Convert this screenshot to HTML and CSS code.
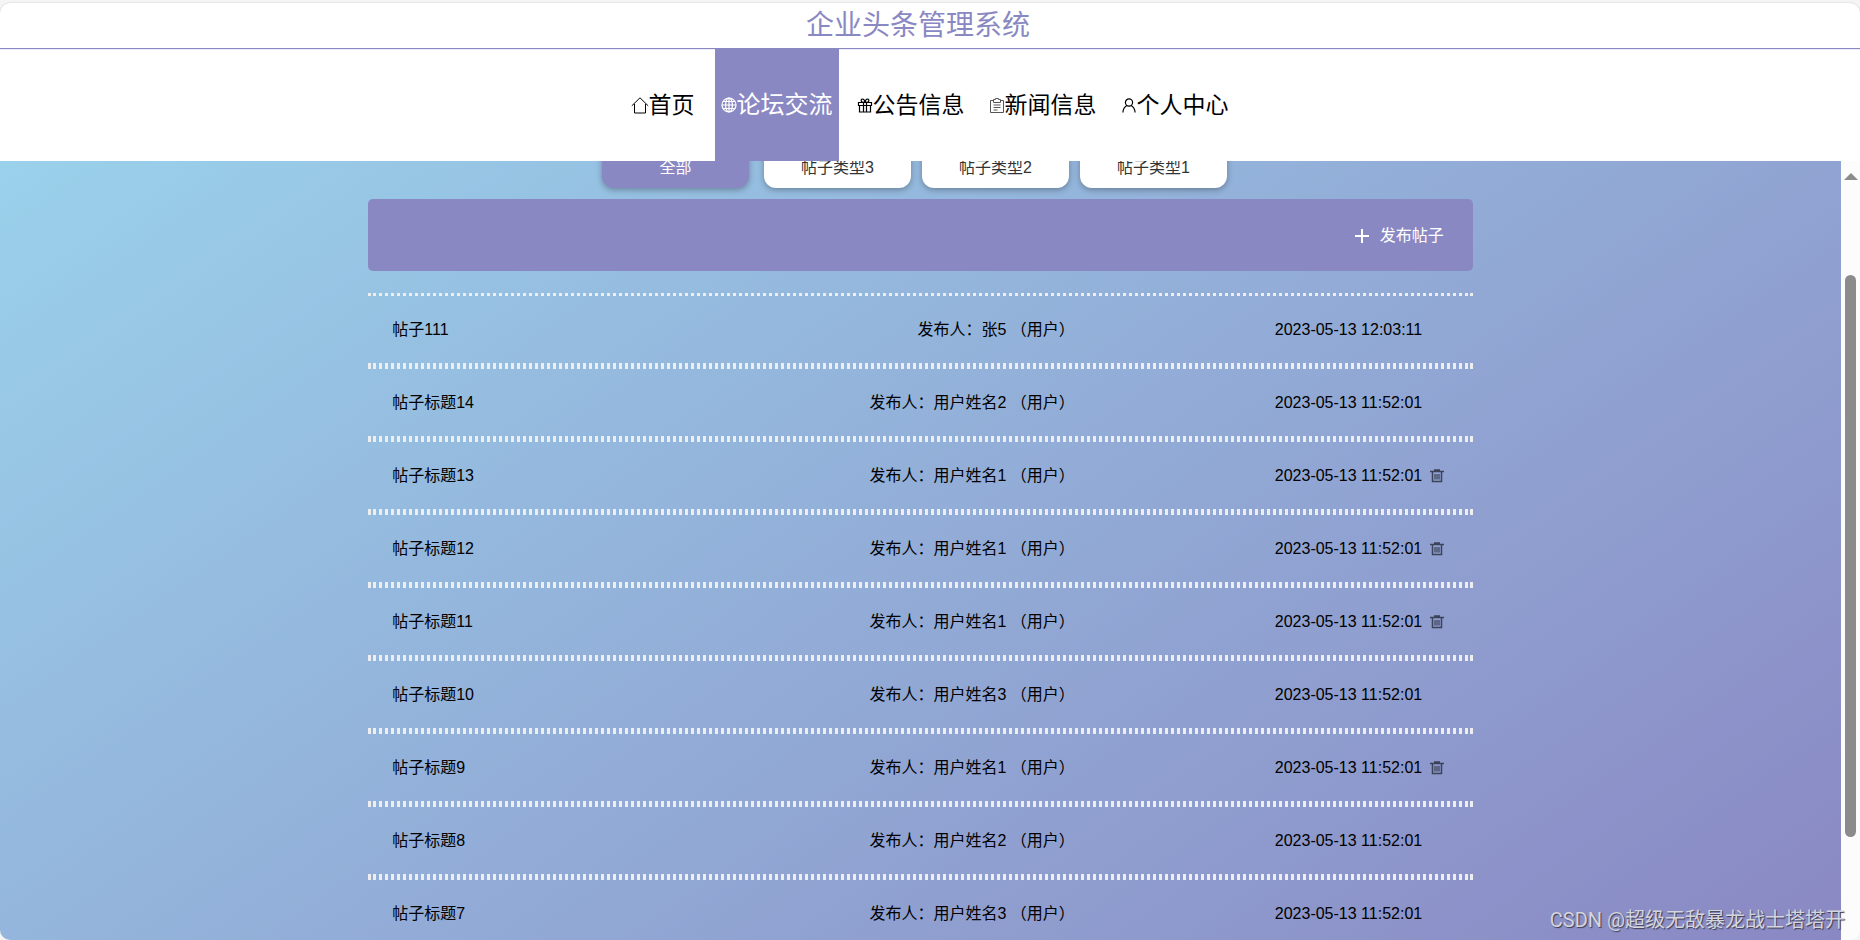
FILE: index.html
```html
<!DOCTYPE html>
<html lang="zh-CN">
<head>
<meta charset="utf-8">
<title>企业头条管理系统</title>
<link rel="stylesheet" href="styles.css">
</head>
<body>
<svg class="sprite" aria-hidden="true">
  <symbol id="trash" viewBox="0 0 14 14">
    <path d="M0 2.500h14M4 1h6M2.500 3v9.500h9V3" fill="none" stroke="currentColor" stroke-width="1.500"/>
    <path d="M5 5v5.500M7 5v5.500M9 5v5.500" fill="none" stroke="currentColor" stroke-width="1.200"/>
  </symbol>
</svg>
<div class="shell">
  <header class="header">
    <h1 class="brand">企业头条管理系统</h1>
    <nav class="nav">
      <a class="nav-item nav-home" href="#"><svg class="nav-icon" viewBox="0 0 18 18"><path d="M.8 9.800 9 1.800l8.200 8M3.500 8v9h11V8"/></svg>首页</a>
      <a class="nav-item active" href="#" aria-current="page"><svg class="nav-icon" viewBox="0 0 16 16"><circle cx="8" cy="8" r="7"/><ellipse cx="8" cy="8" rx="3.400" ry="7"/><path d="M8 1v14M1 8h14M2.200 4.500h11.600M2.200 11.500h11.600"/></svg>论坛交流</a>
      <a class="nav-item" href="#"><svg class="nav-icon" viewBox="0 0 16 16"><path d="M1.500 5.500h13v3h-13zM2.500 8.500h11v6.500h-11zM6.500 5.500V15M9.500 5.500V15M8 5.500 4.500 4.800Q3.500 2 5.500 2T8 5.500Q8.500 2 10.500 2t1 2.800z"/></svg>公告信息</a>
      <a class="nav-item" href="#"><svg class="nav-icon thin" viewBox="0 0 16 16"><path d="M4.500 3.500h-3v12h13v-12h-3M4.500 5.500v-3h2v-1h3v1h2v3zM4.500 8h7M4.500 10.500h7M4.500 13h4"/></svg>新闻信息</a>
      <a class="nav-item" href="#"><svg class="nav-icon" viewBox="0 0 16 16"><circle cx="8" cy="5.500" r="3.600"/><path d="M5.800 8.500C3.500 10 2 12 1.900 15.500M10.200 8.500c2.300 1.500 3.800 3.500 3.900 7"/></svg>个人中心</a>
    </nav>
  </header>
  <div class="viewport">
    <main class="forum">
      <div class="tabs">
        <button class="tab selected" type="button">全部</button>
        <button class="tab" type="button">帖子类型3</button>
        <button class="tab" type="button">帖子类型2</button>
        <button class="tab" type="button">帖子类型1</button>
      </div>
      <div class="toolbar">
        <button class="publish" type="button"><svg class="plus" viewBox="0 0 16 16"><path d="M8 1v14M1 8h14"/></svg>发布帖子</button>
      </div>
      <ul class="posts">
        <li class="post"><a class="title" href="#">帖子111</a><span>发布人：张5 （用户）</span><span class="meta"><time>2023-05-13 12:03:11</time></span></li>
        <li class="post"><a class="title" href="#">帖子标题14</a><span>发布人：用户姓名2 （用户）</span><span class="meta"><time>2023-05-13 11:52:01</time></span></li>
        <li class="post"><a class="title" href="#">帖子标题13</a><span>发布人：用户姓名1 （用户）</span><span class="meta"><time>2023-05-13 11:52:01</time><button class="delete" type="button" aria-label="删除"><svg><use href="#trash"/></svg></button></span></li>
        <li class="post"><a class="title" href="#">帖子标题12</a><span>发布人：用户姓名1 （用户）</span><span class="meta"><time>2023-05-13 11:52:01</time><button class="delete" type="button" aria-label="删除"><svg><use href="#trash"/></svg></button></span></li>
        <li class="post"><a class="title" href="#">帖子标题11</a><span>发布人：用户姓名1 （用户）</span><span class="meta"><time>2023-05-13 11:52:01</time><button class="delete" type="button" aria-label="删除"><svg><use href="#trash"/></svg></button></span></li>
        <li class="post"><a class="title" href="#">帖子标题10</a><span>发布人：用户姓名3 （用户）</span><span class="meta"><time>2023-05-13 11:52:01</time></span></li>
        <li class="post"><a class="title" href="#">帖子标题9</a><span>发布人：用户姓名1 （用户）</span><span class="meta"><time>2023-05-13 11:52:01</time><button class="delete" type="button" aria-label="删除"><svg><use href="#trash"/></svg></button></span></li>
        <li class="post"><a class="title" href="#">帖子标题8</a><span>发布人：用户姓名2 （用户）</span><span class="meta"><time>2023-05-13 11:52:01</time></span></li>
        <li class="post"><a class="title" href="#">帖子标题7</a><span>发布人：用户姓名3 （用户）</span><span class="meta"><time>2023-05-13 11:52:01</time></span></li>
      </ul>
    </main>
    <div class="scrollbar" aria-hidden="true">
      <div class="arrow"></div>
      <div class="track"><div class="thumb"></div></div>
    </div>
  </div>
  <div class="watermark">CSDN @超级无敌暴龙战士塔塔开</div>
</div>
</body>
</html>
```
FILE: styles.css
```css
* { box-sizing: border-box; }

:root {
  --purple: #8a88c3;
  --sky: #9ad1eb;
}

body {
  margin: 0;
  background: #f5f5f5;
  color: #000;
  font: 16px/24px "Liberation Sans", "Noto Sans CJK SC", sans-serif;
}

button {
  border: 0;
  padding: 0;
  background: none;
  color: inherit;
  font: inherit;
  cursor: pointer;
}

a { color: inherit; text-decoration: none; }

.sprite { position: absolute; width: 0; height: 0; }

.shell {
  position: relative;
  display: flex;
  flex-direction: column;
  height: 100vh;
  padding-top: 3px;
}

.header {
  flex: none;
  background: #fff;
  border-radius: 10px 10px 0 0;
  box-shadow: 0 0 2px rgba(0, 0, 0, 0.2);
}

.brand {
  margin: 0;
  padding-right: 24px;
  border-bottom: 1px solid var(--purple);
  color: var(--purple);
  font-size: 28px;
  font-weight: 400;
  line-height: 45px;
  text-align: center;
}

.nav {
  display: flex;
  justify-content: center;
  gap: 12px;
  height: 112px;
  padding-right: 3px;
  box-shadow: inset 0 1px #eeeef8;
}

.nav-item {
  display: flex;
  align-items: center;
  justify-content: center;
  padding: 0 6px;
  font-size: 23px;
}

.nav-home { min-width: 80px; }

.nav-item.active {
  background: var(--purple);
  color: #fff;
  font-size: 24px;
}

.nav-icon {
  width: 16px;
  height: 16px;
  fill: none;
  stroke: currentColor;
  stroke-width: 1.200;
}

.nav-home .nav-icon { width: 18px; height: 18px; stroke-width: 1; }
.nav-icon.thin { stroke: #555; stroke-width: 1; }

.viewport {
  display: flex;
  flex: 1;
  min-height: 0;
  background: #fcfcfc;
  border-radius: 0 0 10px 10px;
  overflow: hidden;
}

.forum {
  flex: 1;
  overflow: hidden;
  background: linear-gradient(145deg, var(--sky), var(--purple));
}

.tabs {
  display: flex;
  justify-content: center;
  gap: 11px;
  margin-top: -21px;
  padding-right: 12px;
}

.tab {
  width: 147px;
  height: 48px;
  padding-top: 8px;
  border-radius: 12px;
  background: #fff;
  box-shadow: 0 2px 6px rgba(0, 0, 0, 0.3);
  color: #333;
}

.tab.selected {
  margin-right: 4px;
  background: var(--purple);
  color: #fff;
}

.toolbar {
  display: flex;
  align-items: center;
  justify-content: flex-end;
  width: 60%;
  height: 72px;
  margin: 11px auto 22px;
  padding: 2px 29px 0;
  border-radius: 5px;
  background: var(--purple);
}

.publish {
  display: flex;
  align-items: center;
  gap: 10px;
  color: #fff;
}

.plus {
  width: 16px;
  height: 16px;
  fill: none;
  stroke: currentColor;
  stroke-width: 2;
}

.posts {
  width: 60%;
  margin: 0 auto;
  padding: 0;
  list-style: none;
}

.post {
  display: grid;
  grid-template-columns: 1fr auto 174px;
  column-gap: 200px;
  align-items: center;
  height: 73px;
  padding: 0 24px;
  border-top: 3px dotted #eee;
  border-bottom: 3px dotted #eee;
}

.meta {
  display: flex;
  align-items: center;
  gap: 8px;
}

.delete { display: flex; color: #3c4258; }
.delete svg { width: 14px; height: 14px; }

.scrollbar {
  display: flex;
  flex: none;
  flex-direction: column;
  align-items: center;
  width: 19px;
  padding: 12px 0;
}

.arrow {
  border: 7px solid transparent;
  border-top: 0;
  border-bottom-color: #8b8b8b;
}

.track {
  flex: 1;
  width: 11px;
  padding-top: 95px;
}

.thumb {
  height: 86%;
  border-radius: 6px;
  background: #8b8b8b;
}

.watermark {
  position: absolute;
  right: 15px;
  bottom: 8px;
  color: #d5d5de;
  font-family: Roboto, "Noto Sans CJK SC", sans-serif;
  font-size: 20px;
  text-shadow: 1px 1px 1px #3c3c50;
}
```
